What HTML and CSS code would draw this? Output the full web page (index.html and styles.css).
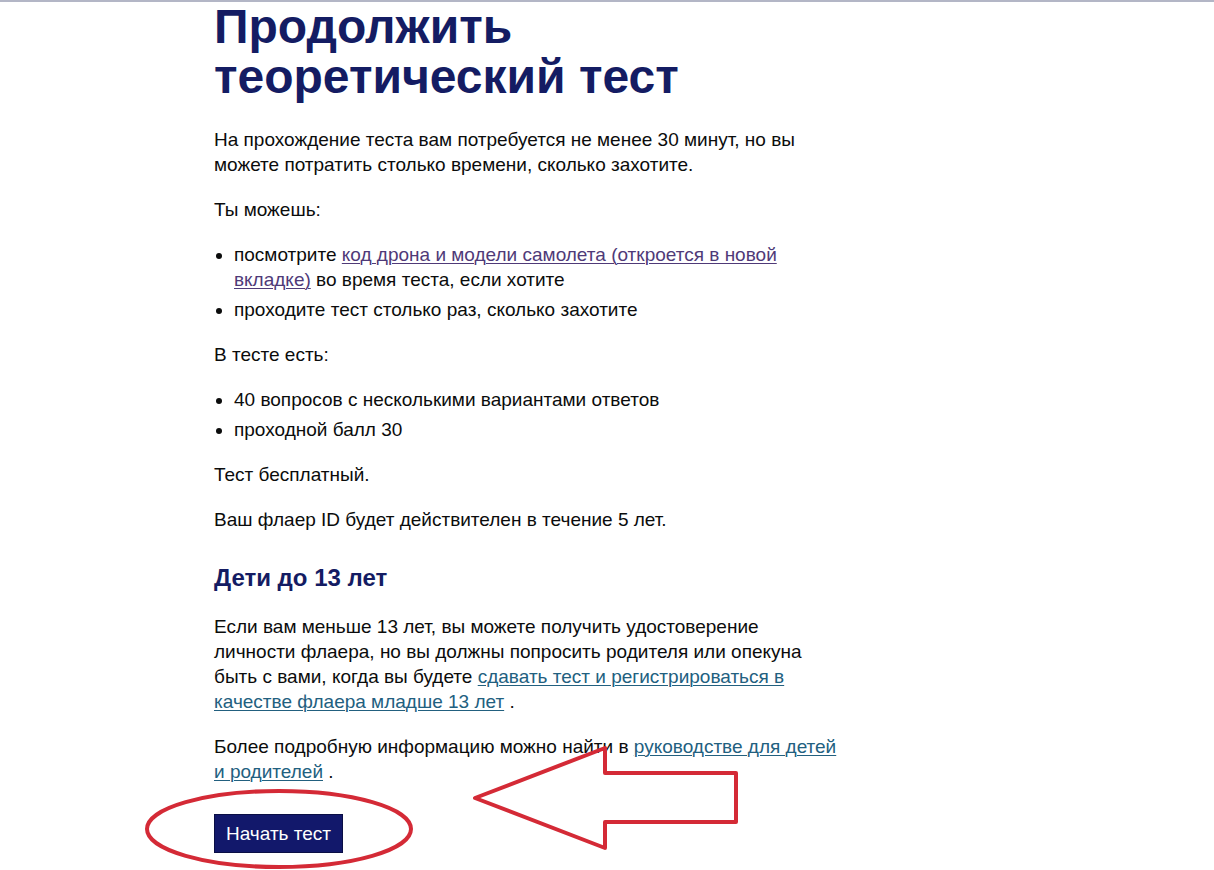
FILE: index.html
```html
<!DOCTYPE html>
<html lang="ru">
<head>
<meta charset="utf-8">
<title>Продолжить теоретический тест</title>
<link rel="stylesheet" href="styles.css">
</head>
<body>
<div class="page">
  <main class="main">
    <h1 class="title">Продолжить теоретический тест</h1>
    <p class="body">На прохождение теста вам потребуется не менее 30 минут, но вы можете потратить столько времени, сколько захотите.</p>
    <p class="body">Ты можешь:</p>
    <ul class="list">
      <li>посмотрите <a class="link visited" href="#">код дрона и модели самолета (откроется в новой вкладке)</a> во время теста, если хотите</li>
      <li>проходите тест столько раз, сколько захотите</li>
    </ul>
    <p class="body">В тесте есть:</p>
    <ul class="list">
      <li>40 вопросов с несколькими вариантами ответов</li>
      <li>проходной балл 30</li>
    </ul>
    <p class="body">Тест бесплатный.</p>
    <p class="body">Ваш флаер ID будет действителен в течение 5 лет.</p>
    <h2 class="subtitle">Дети до 13 лет</h2>
    <p class="body">Если вам меньше 13 лет, вы можете получить удостоверение личности флаера, но вы должны попросить родителя или опекуна быть с вами, когда вы будете <a class="link" href="#">сдавать тест и регистрироваться в качестве флаера младше 13 лет</a> .</p>
    <p class="body">Более подробную информацию можно найти в <a class="link" href="#">руководстве для детей и родителей</a> .</p>
    <button class="button" type="button">Начать тест</button>
  </main>
</div>
<svg class="annot" width="1214" height="870" viewBox="0 0 1214 870" aria-hidden="true">
  <ellipse cx="279" cy="829" rx="132" ry="38" fill="none" stroke="#d42a36" stroke-width="4"/>
  <polygon points="475,798 605,748 605,773 736,773 736,822 605,822 605,848" fill="none" stroke="#d42a36" stroke-width="4" stroke-linejoin="round"/>
</svg>
</body>
</html>
```

FILE: styles.css
```css
html, body {
  margin: 0;
  padding: 0;
  background: #ffffff;
}
body {
  border-top: 2px solid #b3b6c6;
  font-family: "Liberation Sans", Arial, sans-serif;
  color: #0b0c0c;
  min-height: 868px;
  position: relative;
  overflow: hidden;
}
.page {
  padding-left: 214px;
}
.main {
  width: 625px;
}
.title {
  margin: 0 0 25px 0;
  font-size: 48px;
  line-height: 50px;
  font-weight: 700;
  color: #141c63;
}
.body {
  margin: 0 0 20px 0;
  font-size: 19px;
  line-height: 25px;
}
.list {
  margin: 0 0 20px 0;
  padding-left: 20px;
  font-size: 19px;
  line-height: 25px;
}
.list li {
  margin-bottom: 5px;
}
.list li:last-child {
  margin-bottom: 0;
}
.subtitle {
  margin: 31px 0 21px 0;
  font-size: 24px;
  line-height: 30px;
  font-weight: 700;
  color: #141c63;
}
.link {
  color: #22607f;
  text-decoration: underline;
  text-decoration-thickness: 1px;
  text-underline-offset: 2px;
}
.link.visited {
  color: #4f3a78;
}
.button {
  margin-top: 10px;
  display: inline-block;
  white-space: nowrap;
  font-family: "Liberation Sans", Arial, sans-serif;
  font-size: 19px;
  line-height: 25px;
  color: #ffffff;
  background: #12186b;
  border: 1px solid #0a0e45;
  padding: 6px 11px 6px 11px;
  border-radius: 0;
  cursor: pointer;
}
.annot {
  position: absolute;
  left: 0;
  top: -2px;
  pointer-events: none;
}
```
